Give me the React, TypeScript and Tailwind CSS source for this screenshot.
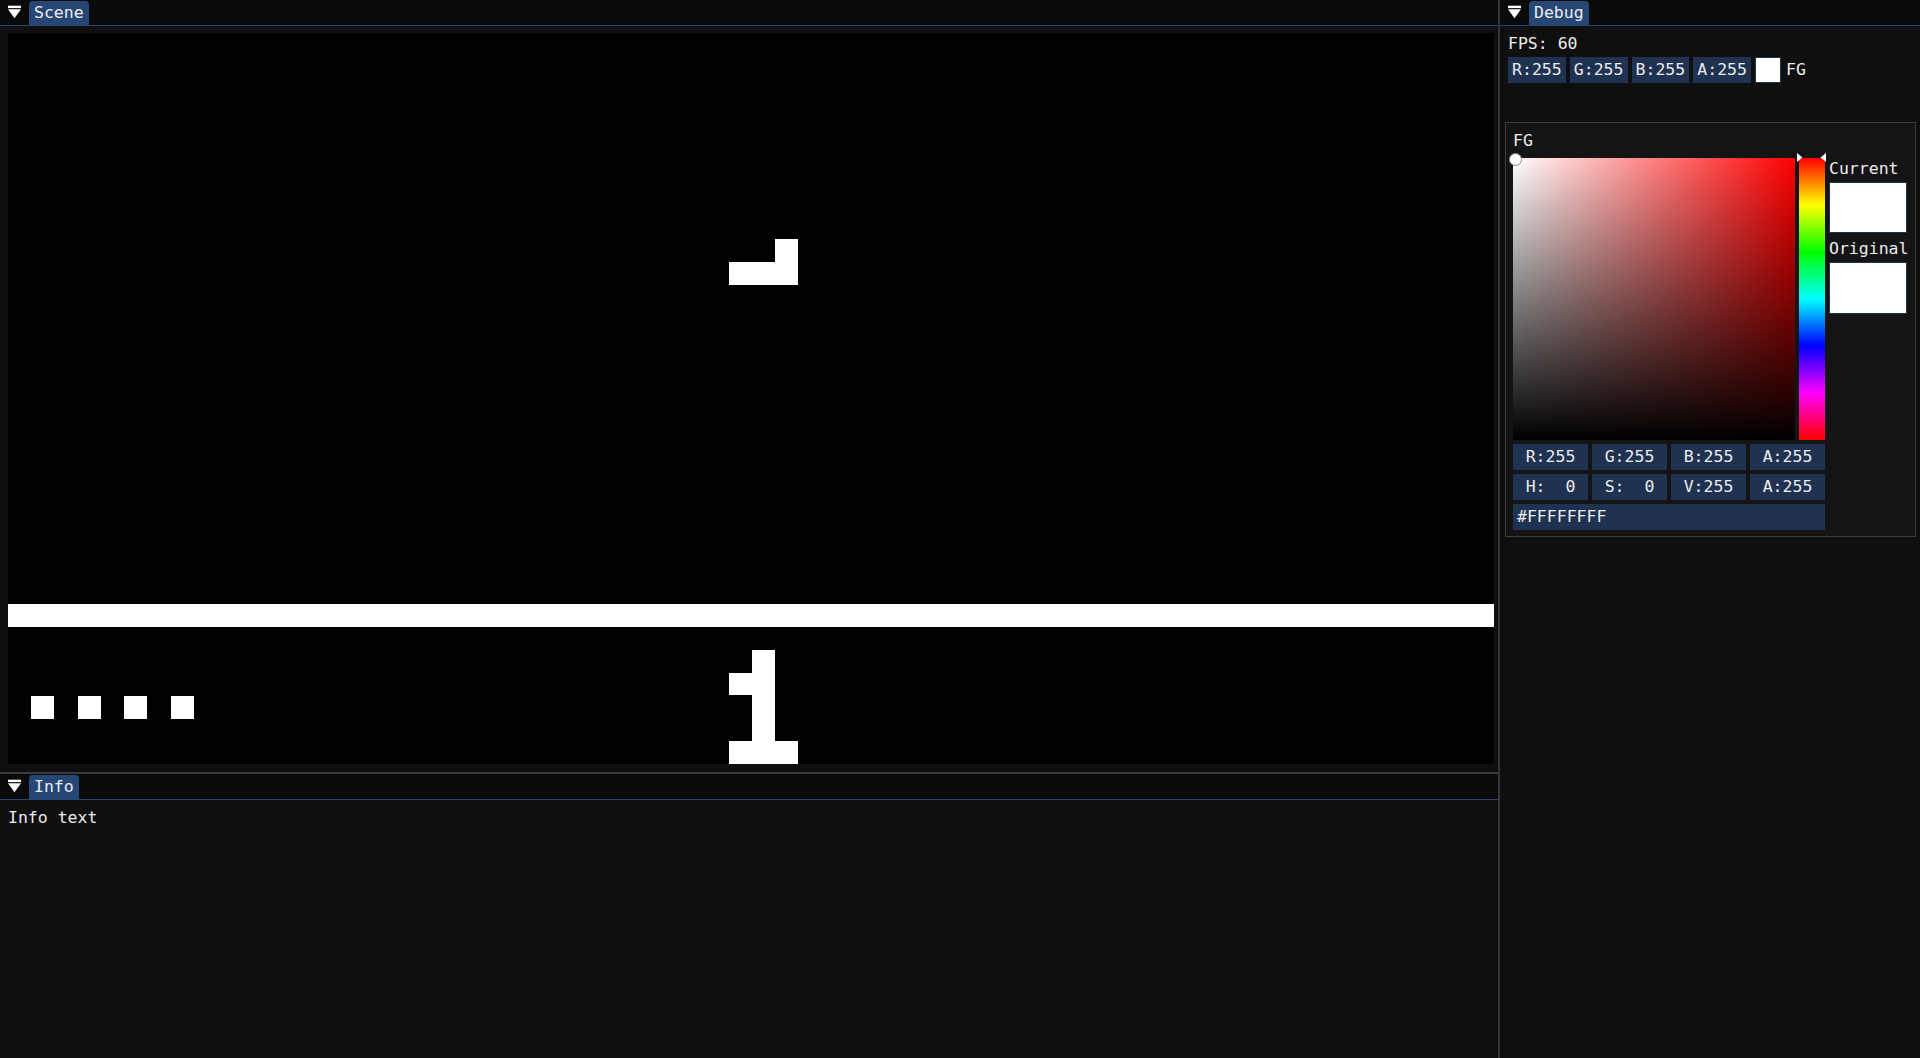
import React from "react";

// Dock-style editor shell: Scene viewport + Info log on the left,
// Debug panel with an inline colour picker on the right.

function DockMenuIcon() {
  return (
    <svg width="13" height="14" viewBox="0 0 13 14" className="mt-[5px] shrink-0">
      <rect x="0" y="0.7" width="13" height="2.4" fill="#fff" />
      <polygon points="0,4.3 13,4.3 6.5,13.3" fill="#fff" />
    </svg>
  );
}

function TabBar({ label }: { label: string }) {
  return (
    <div className="flex h-[26px] shrink-0 items-start gap-[8px] border-b border-[#264775] bg-[#0a0a0a] pl-[8px]">
      <DockMenuIcon />
      <div className="mt-[1px] h-[24px] rounded-t-[4px] bg-[#264775] px-[5px] pt-[3px]">{label}</div>
    </div>
  );
}

function Field({ text, className = "" }: { text: string; className?: string }) {
  return (
    <div
      className={`flex h-[26px] items-center justify-center whitespace-pre bg-[#1f3251] ${className}`}
    >
      {text}
    </div>
  );
}

function SceneCanvas() {
  return (
    <div className="relative h-full w-full bg-black">
      {/* falling piece */}
      <div className="absolute left-[767px] top-[206px] h-[23px] w-[23px] bg-white" />
      <div className="absolute left-[721px] top-[229px] h-[23px] w-[69px] bg-white" />

      {/* floor */}
      <div className="absolute left-0 right-0 top-[571px] h-[23px] bg-white" />

      {/* lives */}
      <div className="absolute left-[23px] top-[663px] h-[23px] w-[23px] bg-white" />
      <div className="absolute left-[70px] top-[663px] h-[23px] w-[23px] bg-white" />
      <div className="absolute left-[116px] top-[663px] h-[23px] w-[23px] bg-white" />
      <div className="absolute left-[163px] top-[663px] h-[23px] w-[23px] bg-white" />

      {/* score digit */}
      <div className="absolute left-[744px] top-[617px] h-[114px] w-[23px] bg-white" />
      <div className="absolute left-[721px] top-[640px] h-[22px] w-[23px] bg-white" />
      <div className="absolute left-[721px] top-[708px] h-[23px] w-[69px] bg-white" />
    </div>
  );
}

function ColorPicker() {
  return (
    <div className="-ml-[3px] w-[411px] border border-[#3c3c45] bg-[#141414] pb-[6px] pl-[7px] pt-[9px]">
      <div className="h-[18px]">FG</div>
      <div className="mt-[8px] flex gap-[4px]">
        <div className="relative h-[282px] w-[282px] bg-[#ff0000]">
          <div className="absolute inset-0 bg-[linear-gradient(to_right,#ffffff,rgba(255,255,255,0))]" />
          <div className="absolute inset-0 bg-[linear-gradient(to_bottom,rgba(0,0,0,0),#000000)]" />
          <div className="absolute -left-[4px] -top-[5px] h-[13px] w-[13px] rounded-full border border-[#8a8a8a] bg-white" />
        </div>
        <div className="relative h-[282px] w-[26px] bg-[linear-gradient(to_bottom,#ff0000,#ffff00,#00ff00,#00ffff,#0000ff,#ff00ff,#ff0000)]">
          <svg width="30" height="10" viewBox="0 0 30 10" className="absolute -left-[2px] -top-[5px]">
            <polygon points="0,0 0,9 5.5,4.5" fill="#fff" />
            <polygon points="29,0 29,9 23.5,4.5" fill="#fff" />
          </svg>
        </div>
        <div className="flex w-[78px] flex-col pt-[2px]">
          <div className="h-[18px]">Current</div>
          <div className="mt-[4px] h-[51px] border border-[#22324d] bg-white" />
          <div className="mt-[7px] h-[18px]">Original</div>
          <div className="mt-[4px] h-[52px] border border-[#22324d] bg-white" />
        </div>
      </div>
      <div className="mt-[4px] grid w-[312px] grid-cols-4 gap-[4px]">
        <Field text="R:255" />
        <Field text="G:255" />
        <Field text="B:255" />
        <Field text="A:255" />
        <Field text="H:  0" />
        <Field text="S:  0" />
        <Field text="V:255" />
        <Field text="A:255" />
      </div>
      <div className="mt-[4px] flex h-[26px] w-[312px] items-center bg-[#1f3251] pl-[4px]">#FFFFFFFF</div>
    </div>
  );
}

export default function App() {
  return (
    <div className="flex h-[1058px] w-[1920px] overflow-hidden bg-[#0f0f0f] font-['DejaVu_Sans_Mono',monospace] text-[16.5px] leading-[18px] text-[#ececec]">
      <div className="flex w-[1498px] flex-col">
        <div className="flex h-[772px] flex-col">
          <TabBar label="Scene" />
          <div className="flex-1 pb-[8px] pl-[8px] pr-[4px] pt-[7px]">
            <SceneCanvas />
          </div>
        </div>
        <div className="h-[2px] bg-[#393940]" />
        <div className="flex flex-1 flex-col">
          <TabBar label="Info" />
          <div className="px-[8px] pt-[9px]">Info text</div>
        </div>
      </div>

      <div className="w-[2px] bg-[#34343d]" />

      <div className="flex flex-1 flex-col">
        <TabBar label="Debug" />
        <div className="flex flex-col pl-[8px] pt-[9px]">
          <div className="h-[18px]">FPS: 60</div>
          <div className="mt-[4px] flex items-center gap-[4px]">
            <div className="grid w-[243px] grid-cols-4 gap-[4px]">
              <Field text="R:255" />
              <Field text="G:255" />
              <Field text="B:255" />
              <Field text="A:255" />
            </div>
            <div className="h-[26px] w-[26px] border border-[#22324d] bg-white" />
            <div className="ml-[1px]">FG</div>
          </div>
          <div className="mt-[39px]">
            <ColorPicker />
          </div>
        </div>
      </div>
    </div>
  );
}
